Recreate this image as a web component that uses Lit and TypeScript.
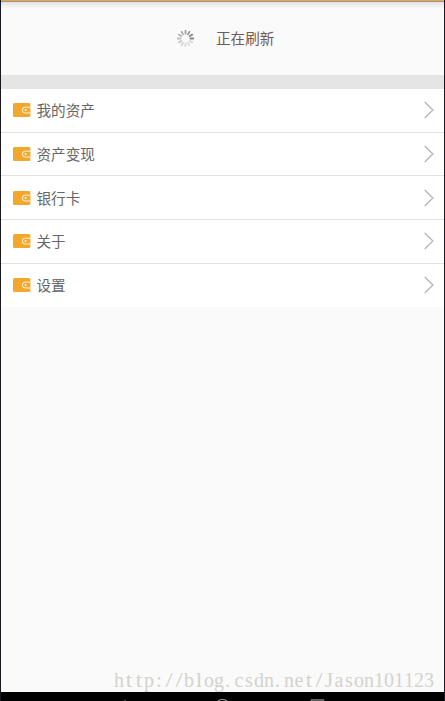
import { LitElement, html, css, svg } from "lit";
import { customElement } from "lit/decorators.js";
import { styleMap } from "lit/directives/style-map.js";

@customElement("menu-row")
class MenuRow extends LitElement {
  static properties = { label: { type: String } };
  declare label: string;

  static styles = css`
    :host { display: flex; align-items: center; box-sizing: border-box; height: 43.7px; padding: 0 10px 1.4px 11.7px; background: #fff; }
    .wallet { width: 18px; height: 14px; flex: none; }
    .label { flex: 1; margin-left: 5.8px; font-size: 14.6px; line-height: 22px; color: #666; white-space: nowrap; }
    .chevron { width: 10px; height: 18px; flex: none; margin-top: 0.4px; }
  `;

  render() {
    return html`
      <svg class="wallet" viewBox="0 0 18 14">
        <rect width="17.4" height="14" rx="1.6" fill="#f2a82d" />
        <path d="M17.4 4.2H12.2a2.8 2.8 0 0 0 0 5.8H17.4" fill="none" stroke="#fff3dc" stroke-width="1" />
        <circle cx="12.6" cy="7.1" r="1" fill="#fff6e5" />
      </svg>
      <span class="label">${this.label}</span>
      <svg class="chevron" viewBox="0 0 10 18">
        <path d="M.7 1 8.9 9 .7 17" fill="none" stroke="#b5b5b5" stroke-width="1.3" />
      </svg>
    `;
  }
}

const SPOKES = ["#a5a5a5", "#969696", "#8b8b8b", "#858585", "#d8d8d8", "#dedede", "#dadada", "#d4d4d4", "#cbcbcb", "#c0c0c0", "#b9b9b9", "#afafaf"];

const STRETCH: Record<string, number> = { t: 1.15, l: 1.1, "/": 1.3, J: 1.1 };

@customElement("app-root")
class AppRoot extends LitElement {
  static styles = css`
    :host { display: flex; flex-direction: column; box-sizing: border-box; height: 701px; position: relative; overflow: hidden;
      background: #fafafa; font-family: "Noto Sans CJK SC", sans-serif; border-left: 1px solid #191820; border-right: 1px solid #191820; }
    .status { height: 9px; flex: none; background: linear-gradient(#dca75f 0 1px, #a8947c 1px 2px, #dedee0 2px, #ebebed 4px, #fafafa 9px); }
    .refresh { height: 66px; flex: none; display: flex; align-items: center; box-sizing: border-box; padding: 0 0 8px 175.3px; }
    .spinner { width: 19px; height: 19px; }
    .refreshing { margin-left: 20.7px; font-size: 14.6px; line-height: 22px; color: #705b58; }
    .gap { height: 14px; flex: none; background: #e5e5e5; }
    .menu { display: flex; flex-direction: column; flex: none; }
    .item:not(:last-child) { box-shadow: inset 0 -1px #e2e2e2; }
    .space { flex: 1; }
    .watermark { display: flex; flex: none; margin-left: 113px; height: 24px; font: 20px/24px "Liberation Serif", serif; color: #d3d3cc; }
    .cell { width: 10px; flex: none; text-align: center; }
    .cell.point { text-align: left; text-indent: 1px; }
    .nav { height: 9px; flex: none; background: #000; margin: 0 -1px; }
    .keys { display: block; width: 445px; height: 9px; }
  `;

  renderCell(c: string) {
    const stretch = STRETCH[c];
    return html`<span class="cell ${c === "." ? "point" : ""}" style=${styleMap(stretch ? { transform: `scaleX(${stretch})` } : {})}>${c}</span>`;
  }

  render() {
    return html`
      <div class="status"></div>
      <div class="refresh">
        <svg class="spinner" viewBox="-9.5 -9.5 19 19">
          ${SPOKES.map((c, i) => svg`<path d="M0-7.8V-4.8" stroke=${c} stroke-width="1.8" stroke-linecap="round" transform="rotate(${i * 30})" />`)}
        </svg>
        <span class="refreshing">正在刷新</span>
      </div>
      <div class="gap"></div>
      <div class="menu">
        ${["我的资产", "资产变现", "银行卡", "关于", "设置"].map((t) => html`<menu-row class="item" .label=${t}></menu-row>`)}
      </div>
      <div class="space"></div>
      <div class="watermark">${[..."http://blog.csdn.net/Jason101123"].map((c) => this.renderCell(c))}</div>
      <div class="nav">
        <svg class="keys" viewBox="0 0 445 9" fill="none" stroke="#858585">
          <path d="M122.5 10.2 125.5 8V12" stroke="#555" />
          <circle cx="222.5" cy="14" r="6.6" stroke-width="1.2" />
          <rect x="311.5" y="8" width="12" height="11" stroke-width="1.4" />
        </svg>
      </div>
    `;
  }
}
